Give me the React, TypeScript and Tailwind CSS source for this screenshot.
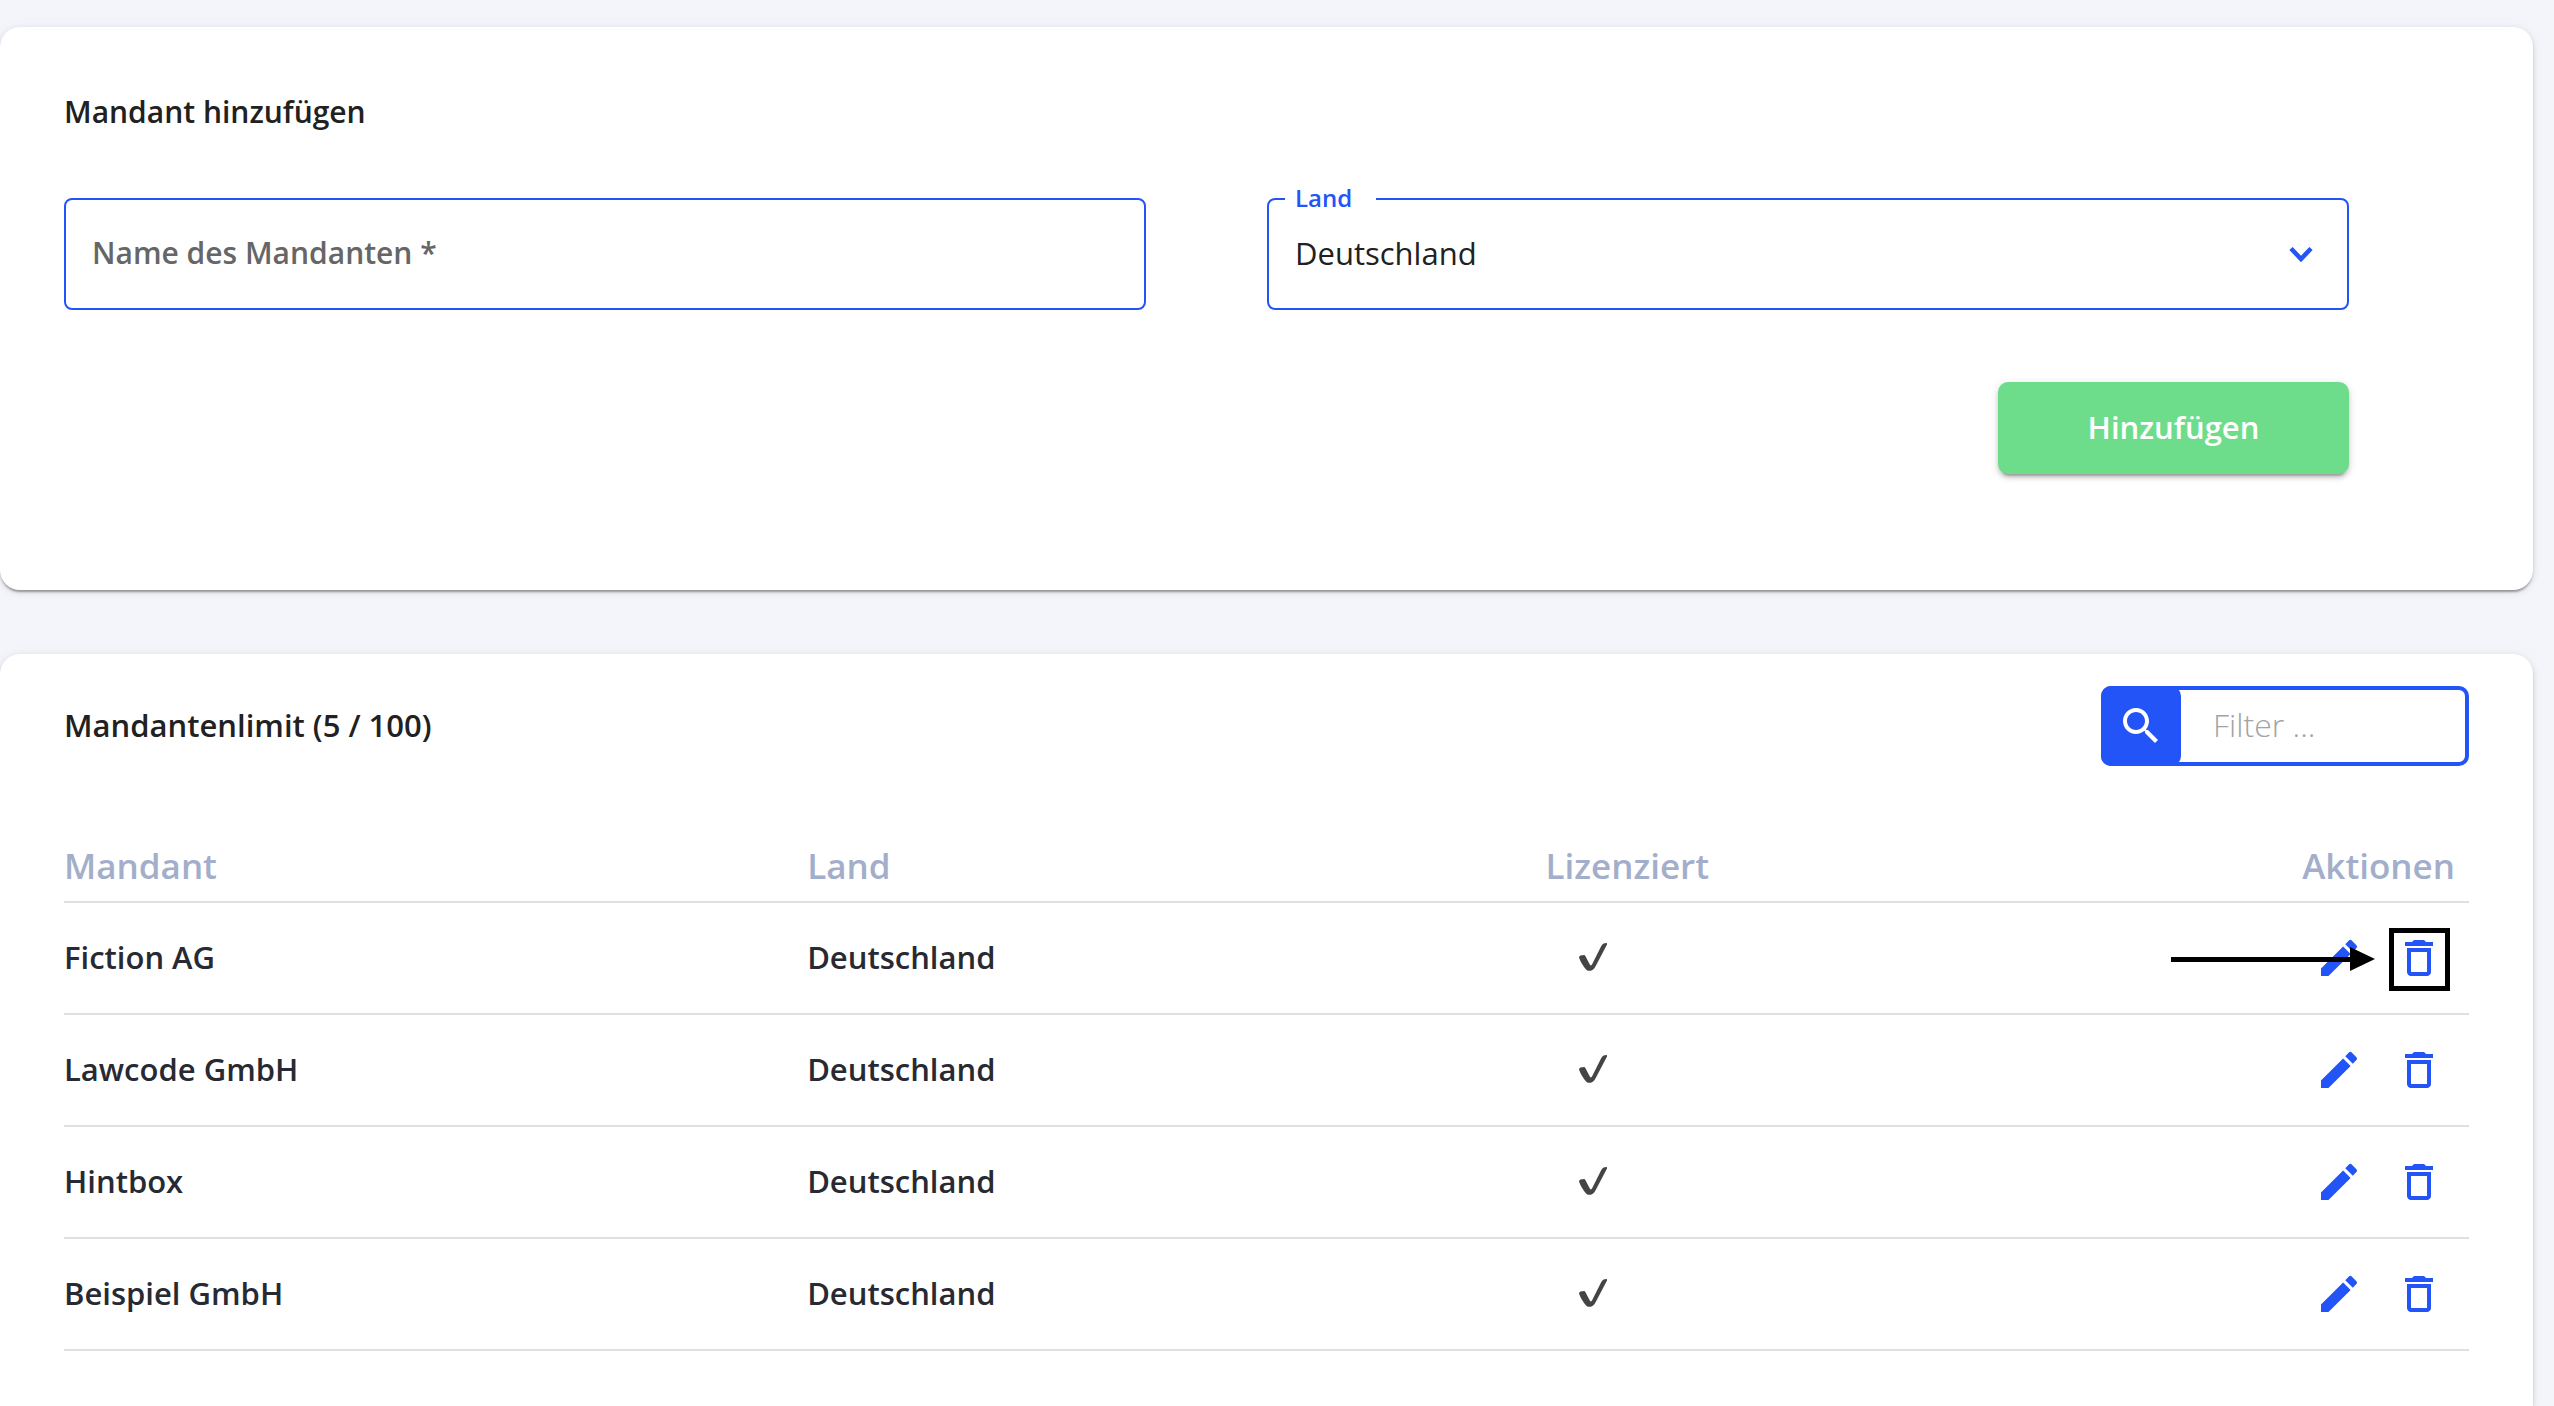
import React from "react";

const clients = ["Fiction AG", "Lawcode GmbH", "Hintbox", "Beispiel GmbH"];

const cardShadow =
  "shadow-[0_4px_2px_-2px_rgba(0,0,0,0.2),0_2px_2px_rgba(0,0,0,0.14),0_2px_6px_rgba(0,0,0,0.12),0_0_16px_rgba(0,0,0,0.03)]";

function CheckIcon() {
  return (
    <svg role="img" aria-label="Ja" viewBox="0 0 28 28" className="block h-7 w-7" fill="#444">
      <path d="M0 14.500C0 12.800 2 12 5.500 12L6.500 13.200 10.800 21.600C11.500 22.800 12.300 22.600 13 21.500L22 3.500C23.300 1 24.500 0 28 0V1.500L17 22.500C15 26.300 13.500 27.800 10.500 27.800C8 27.800 7 26.700 5.200 24.200C3 21 1.200 18 0 14.500Z" />
    </svg>
  );
}

function PencilIcon() {
  return (
    <svg viewBox="0 0 24 24" className="block h-12 w-12" fill="currentColor" aria-hidden="true">
      <path d="M3 17.250V21h3.750L17.810 9.940l-3.750-3.750L3 17.250zM20.710 7.040c.39-.39.39-1.020 0-1.410l-2.340-2.340a.9959.9959 0 0 0-1.410 0l-1.830 1.830 3.750 3.750 1.830-1.830z" />
    </svg>
  );
}

function TrashIcon() {
  return (
    <svg viewBox="0 0 24 24" className="block h-12 w-12" fill="currentColor" aria-hidden="true">
      <path d="M6 19c0 1.100.9 2 2 2h8c1.100 0 2-.9 2-2V7H6v12zM8 9h8v10H8V9zm7.500-5-1-1h-5l-1 1H5v2h14V4h-3.500z" />
    </svg>
  );
}

export default function App() {
  return (
    <main className="flex min-h-screen flex-col gap-16 bg-[#f4f5fb] pt-[27px] pr-[21px] font-['Open_Sans',sans-serif] text-[31px] leading-[48px] text-[#212121]">
      <section className={`rounded-[20px] bg-white pt-[61px] pr-[184px] pb-[116px] pl-16 ${cardShadow}`}>
        <h2 className="text-3xl leading-[48px] font-semibold">Mandant hinzufügen</h2>
        <form onSubmit={(e) => e.preventDefault()}>
          <div className="mt-[62px] grid grid-cols-2 gap-[121px]">
            <input
              required
              aria-label="Name des Mandanten"
              placeholder="Name des Mandanten *"
              className="block h-28 w-full rounded-lg border-2 border-[#2254f7] px-[26px] pb-1 text-3xl font-semibold shadow-none outline-none placeholder:text-[#666] placeholder:opacity-100"
            />
            <div className="relative">
              <label
                htmlFor="land"
                className="absolute -top-3 left-[18px] bg-white pr-6 pl-[10px] text-2xl leading-6 font-semibold text-[#2254f7]"
              >
                Land
              </label>
              <select
                id="land"
                className="block h-28 w-full appearance-none rounded-lg border-2 border-[#2254f7] bg-transparent px-[26px] pb-0.5 outline-none"
              >
                <option>Deutschland</option>
              </select>
              <svg
                viewBox="0 0 24 16"
                className="pointer-events-none absolute top-12 right-9 h-4 w-6"
                fill="none"
                stroke="#2254f7"
                strokeWidth="4.500"
                aria-hidden="true"
              >
                <path d="M2 2.500 12 13 22 2.500" />
              </svg>
            </div>
          </div>
          <div className="mt-[72px] flex justify-end">
            <button className="h-[92px] w-[351px] rounded-[10px] bg-[#6ddd8b] pb-0.5 font-semibold text-white shadow-[0_6px_2px_-4px_rgba(0,0,0,0.2),0_4px_4px_rgba(0,0,0,0.14),0_2px_10px_rgba(0,0,0,0.12)]">
              Hinzufügen
            </button>
          </div>
        </form>
      </section>

      <section className={`flex-1 rounded-t-[20px] bg-white px-16 pt-8 ${cardShadow}`}>
        <div className="flex items-center justify-between">
          <h2 className="pb-0.5 font-semibold">Mandantenlimit (5 / 100)</h2>
          <div className="flex h-20 w-[368px] rounded-[10px] border-4 border-[#2254f7] bg-white">
            <label
              htmlFor="filter"
              className="-my-1 -ml-1 flex w-20 shrink-0 items-center justify-center rounded-[10px] bg-[#2254f7] text-white"
            >
              <svg viewBox="0 0 24 24" className="h-12 w-12" fill="currentColor" aria-hidden="true">
                <path d="M15.500 14h-.79l-.28-.27C15.410 12.590 16 11.110 16 9.500 16 5.910 13.090 3 9.500 3S3 5.910 3 9.500 5.910 16 9.500 16c1.610 0 3.090-.59 4.230-1.570l.27.28v.79l5 4.990L20.490 19l-4.990-5zm-6 0C7.010 14 5 11.990 5 9.500S7.010 5 9.500 5 14 7.010 14 9.500 11.990 14 9.500 14z" />
              </svg>
            </label>
            <input
              id="filter"
              aria-label="Filter"
              placeholder="Filter ..."
              className="w-full min-w-0 px-8 pb-0.5 text-[32px] font-light outline-none placeholder:text-[#a3a3a3] placeholder:opacity-100"
            />
          </div>
        </div>

        <table className="mt-[76px] w-full table-fixed text-left font-semibold text-[#272a33]">
          <thead className="text-[35px] leading-[48px] text-[#a3aecb]">
            <tr className="border-b-2 border-[#e0e0e0]">
              <th className="w-[30.9%] pb-[11px] font-semibold">Mandant</th>
              <th className="w-[30.7%] pb-[11px] font-semibold">Land</th>
              <th className="pb-[11px] font-semibold">Lizenziert</th>
              <th className="w-[16%] pr-3.5 pb-[11px] text-right font-semibold">Aktionen</th>
            </tr>
          </thead>
          <tbody>
            {clients.map((name, i) => (
              <tr key={name} className="h-28 border-b-2 border-[#e0e0e0]">
                <td className="pb-0.5">{name}</td>
                <td className="pb-0.5">Deutschland</td>
                <td className="pb-0.5 pl-[34px]">
                  <CheckIcon />
                </td>
                <td>
                  <div className="relative flex justify-end gap-8 pr-[26px] text-[#2254f7]">
                    <button aria-label={`${name} bearbeiten`}>
                      <PencilIcon />
                    </button>
                    <button aria-label={`${name} löschen`}>
                      <TrashIcon />
                    </button>
                    {i === 0 && (
                      <>
                        <svg
                          viewBox="0 0 204 24"
                          className="pointer-events-none absolute top-[13px] right-[94px] h-6 w-[204px]"
                          aria-hidden="true"
                        >
                          <path d="M0 10H179V0L204 12 179 24V15H0Z" fill="#000" />
                        </svg>
                        <span className="pointer-events-none absolute -top-1.5 right-[19px] h-[63px] w-[61px] border-5 border-black" />
                      </>
                    )}
                  </div>
                </td>
              </tr>
            ))}
          </tbody>
        </table>
      </section>
    </main>
  );
}
